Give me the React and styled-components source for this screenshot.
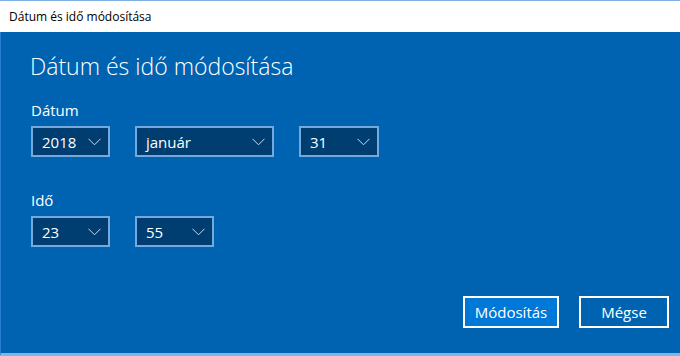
import styled, { createGlobalStyle } from "styled-components";

const GlobalStyle = createGlobalStyle`
  html, body {
    margin: 0;
    padding: 0;
    background: #ffffff;
  }
  body {
    font-family: "Open Sans", "Noto Sans", sans-serif;
  }
`;

const Window = styled.div`
  display: flex;
  flex-direction: column;
  width: 680px;
  height: 356px;
  border-top: 1px solid #7fb1e3;
  box-sizing: border-box;
  overflow: hidden;
`;

const TitleBar = styled.div`
  display: flex;
  align-items: center;
  height: 31px;
  padding-left: 9px;
  background: #ffffff;
  color: #000000;
  font-size: 12px;
  flex-shrink: 0;
`;

const Content = styled.div`
  flex: 1;
  display: flex;
  flex-direction: column;
  padding: 19px 11px 0 30px;
  background: #0063b1;
  border-left: 1px solid #2a7fcc;
  border-bottom: 3px solid #7fb6ea;
`;

const Heading = styled.div`
  margin-left: -1px;
  color: #ffffff;
  font-size: 23px;
  font-weight: 300;
  line-height: 30px;
`;

const Label = styled.div`
  color: #ffffff;
  font-size: 15px;
  line-height: 20px;
  margin-top: ${(p) => p.$top}px;
`;

const Row = styled.div`
  display: flex;
  gap: 25px;
  margin-top: 6px;
`;

const Select = styled.div`
  display: flex;
  align-items: center;
  justify-content: space-between;
  box-sizing: border-box;
  width: ${(p) => p.$w}px;
  height: 31px;
  padding: 0 7px 0 9px;
  background: #003e72;
  border: 2px solid #75a9dc;
  color: #ffffff;
  font-size: 15px;
`;

const Chevron = () => (
  <svg width="13" height="8" viewBox="0 0 13 8">
    <path d="M0.5 0.8 L6.5 6.8 L12.5 0.8" fill="none" stroke="#c9dcef" strokeWidth="1" />
  </svg>
);

const Footer = styled.div`
  display: flex;
  justify-content: flex-end;
  gap: 20px;
  margin-top: auto;
  margin-bottom: 25px;
`;

const Button = styled.button`
  box-sizing: border-box;
  width: ${(p) => p.$w}px;
  height: 32px;
  background: ${(p) => (p.$primary ? "#0078d7" : "#0063b1")};
  border: 2px solid #ffffff;
  color: #ffffff;
  font-family: inherit;
  font-size: 15px;
  padding: 0;
`;

function Dropdown({ value, width }) {
  return (
    <Select $w={width}>
      <span>{value}</span>
      <Chevron />
    </Select>
  );
}

export default function App() {
  return (
    <>
      <GlobalStyle />
      <Window>
        <TitleBar>Dátum és idő módosítása</TitleBar>
        <Content>
          <Heading>Dátum és idő módosítása</Heading>
          <Label $top={19}>Dátum</Label>
          <Row>
            <Dropdown value="2018" width={79} />
            <Dropdown value="január" width={139} />
            <Dropdown value="31" width={80} />
          </Row>
          <Label $top={33}>Idő</Label>
          <Row>
            <Dropdown value="23" width={79} />
            <Dropdown value="55" width={79} />
          </Row>
          <Footer>
            <Button $primary $w={96}>Módosítás</Button>
            <Button $w={90}>Mégse</Button>
          </Footer>
        </Content>
      </Window>
    </>
  );
}
